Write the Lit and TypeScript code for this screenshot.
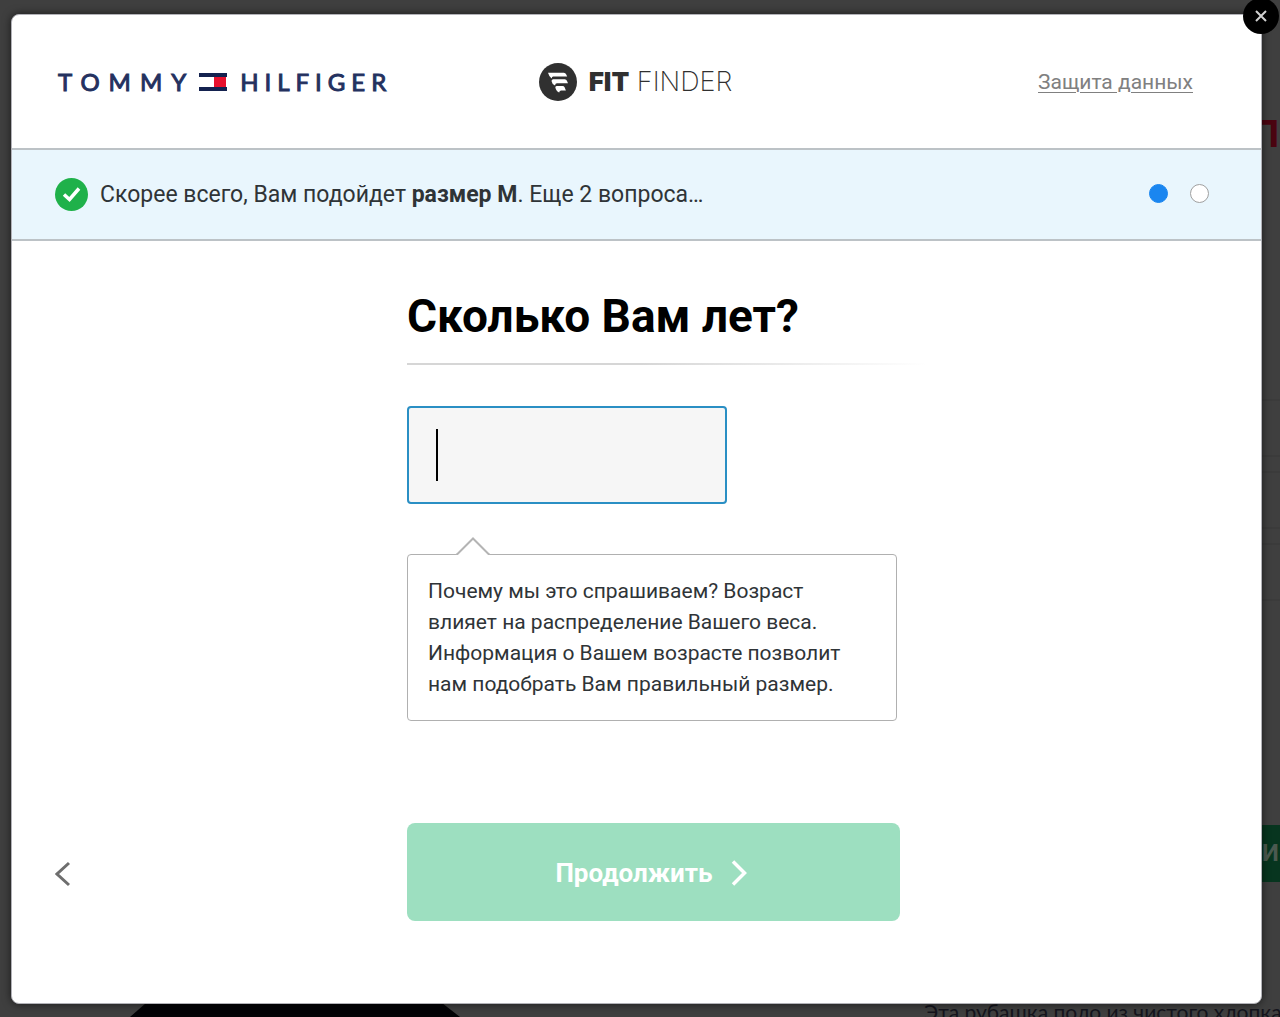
import { LitElement, html, css } from "lit";
import { customElement, state } from "lit/decorators.js";

@customElement("fit-brand")
class FitBrand extends LitElement {
  static styles = css`
    :host { display: block; }
    .brand { display: flex; align-items: center; gap: 13px; color: #24315f; font: 400 24px/32px Lato, sans-serif; -webkit-text-stroke: 1px #24315f; }
    .first { letter-spacing: 9px; margin-right: -9px; }
    .last { letter-spacing: 6px; }
    .flag { display: block; width: 28px; height: 18px; }
  `;
  render() {
    return html`<div class="brand">
      <span class="first">TOMMY</span>
      <svg class="flag" viewBox="0 0 28 18" aria-hidden="true">
        <rect x="0" y="0" width="28" height="4" fill="#14224f"></rect>
        <rect x="0" y="14" width="28" height="4" fill="#14224f"></rect>
        <rect x="0" y="4" width="15" height="10" fill="#fff"></rect>
        <rect x="15" y="4" width="12" height="10" fill="#e8112d"></rect>
      </svg>
      <span class="last">HILFIGER</span>
    </div>`;
  }
}

@customElement("fit-finder-logo")
class FitFinderLogo extends LitElement {
  static styles = css`
    :host { display: block; }
    .logo { display: flex; align-items: center; gap: 12px; padding-left: 20px; color: #303030; font: 200 27px/38px Inter, sans-serif; }
    .mark { display: block; width: 38px; height: 38px; }
    .fit { font-size: 26px; font-weight: 900; }
  `;
  render() {
    return html`<div class="logo">
      <svg class="mark" viewBox="0 0 38 38" aria-hidden="true">
        <circle cx="19" cy="19" r="19" fill="#303030"></circle>
        <path d="M9 9.800H24.800Q26.500 9.800 27.100 11.300L28.200 13.600H14.200Q12.800 13.600 12.600 15.400Q10.200 14 9 9.800Z" fill="#fff"></path>
        <path d="M12.500 17.900Q12.700 16.300 14.200 16.300H25.800Q27.300 16.300 27.900 17.800L29 20.200H18Q16.300 20.200 16 22.600Q13.200 21.600 12.500 17.900Z" fill="#fff"></path>
        <path d="M16.300 24.300Q16.500 22.900 18 22.900H23.500Q25 22.900 25.600 24.300L26.900 27.400H22.200Q20.400 27.400 20.200 29.500Q17 28.300 16.300 24.300Z" fill="#fff"></path>
      </svg>
      <span><span class="fit">FIT</span> FINDER</span>
    </div>`;
  }
}

@customElement("app-root")
class AppRoot extends LitElement {
  @state() private age = "";

  static styles = css`
    :host { display: block; font-family: Roboto, sans-serif; color: #2f3437; }
    * { box-sizing: border-box; }
    .page { position: relative; display: flex; min-height: 100vh; padding: 14px 18px 13px 11px; background: #3f3f3f; overflow: hidden; }
    .behind { position: absolute; inset: 0; overflow: hidden; }
    .price { position: absolute; right: 0; top: 110px; color: #4a0410; font: 700 38px/44px "Open Sans", sans-serif; }
    .buy { position: absolute; right: 0; top: 825px; width: 18px; height: 57px; background: #07351f; color: #4b5a50; font: 700 24px/57px Roboto, sans-serif; }
    .rules { position: absolute; right: 0; top: 397px; width: 18px; height: 204px; color: #383838; }
    .shirt { position: absolute; left: 130px; bottom: 0; width: 330px; height: 16px; }
    .desc { position: absolute; left: 924px; top: 1000px; margin: 0; white-space: nowrap; color: #14141c; font: 400 21px/24px Lato, sans-serif; }
    .dialog { position: relative; display: flex; flex: 1; flex-direction: column; min-width: 0; border: 1px solid #b2b2b8; border-radius: 8px; background: #fff; box-shadow: 0 0 8px rgba(0, 0, 0, 0.6); }
    .close { position: absolute; top: -17px; right: -18px; display: grid; place-items: center; width: 36px; height: 36px; padding: 0; border: 0; border-radius: 50%; background: #000; }
    .close svg { display: block; width: 12px; height: 12px; }
    .head { display: grid; grid-template-columns: 1fr auto 1fr; align-items: center; height: 133px; padding: 0 68px 0 46px; }
    .privacy { justify-self: end; color: #808080; font-size: 21px; line-height: 28px; text-decoration: underline; text-decoration-thickness: 1px; text-underline-offset: 3px; }
    .status { display: flex; align-items: center; gap: 12px; height: 93px; padding: 0 52px 0 43px; border-top: 2px solid #bcc2c6; border-bottom: 2px solid #bcc2c6; background: #e9f6fd; }
    .tick { display: block; flex: none; width: 33px; height: 33px; }
    .status p { flex: 1; margin: 0; font-size: 23px; line-height: 28px; }
    .steps { display: flex; gap: 22px; margin: 0; padding: 0 0 2px; list-style: none; }
    .step { width: 19px; height: 19px; border: 1px solid #a0a0a0; border-radius: 50%; background: #fff; }
    .step.on { border-color: #1a86f0; background: #1a86f0; }
    .form { display: grid; flex: 1; grid-template-columns: 34px minmax(0, 1fr); grid-template-rows: 1fr auto; padding: 48px 43px 82px; }
    .question { grid-column: 2; justify-self: center; width: 493px; max-width: 100%; }
    .title { margin: 0; color: #000; font-size: 46px; line-height: 54px; font-weight: 700; }
    .title label { white-space: nowrap; }
    .line { width: 520px; height: 2px; margin-top: 20px; background: linear-gradient(90deg, #d6d6d6 45%, #fff); }
    .field { position: relative; width: 320px; margin-top: 41px; }
    .age { display: block; width: 100%; height: 98px; padding: 0 28px; border: 2px solid #2a8fc4; border-radius: 4px; outline: 0; background: #f6f6f6; color: #000; font: 400 44px/52px Roboto, sans-serif; }
    .caret { position: absolute; left: 29px; top: 23px; width: 2px; height: 52px; background: #000; pointer-events: none; }
    .age:focus ~ .caret, .age:not(:placeholder-shown) ~ .caret { display: none; }
    .hint { position: relative; width: 490px; max-width: 100%; margin-top: 50px; padding: 21px 20px 20px; border: 1px solid #b0b0b0; border-radius: 4px; font-size: 21px; line-height: 31px; }
    .hint p { margin: 0; }
    .peak { position: absolute; left: 48px; top: -18px; display: block; width: 34px; height: 18px; }
    .back { display: grid; place-items: center start; width: 34px; padding: 3px 0 0; border: 0; background: none; }
    .back svg { display: block; width: 16px; height: 26px; }
    .next { display: flex; align-items: center; justify-content: center; gap: 18px; justify-self: center; width: 493px; max-width: 100%; height: 98px; padding: 2px 5px 0 0; border: 0; border-radius: 8px; background: #9ddfc0; color: #fff; font: 700 26px/32px Roboto, sans-serif; }
    .next svg { display: block; width: 16px; height: 26px; }
  `;

  render() {
    return html`
      <div class="page">
        <div class="behind" aria-hidden="true">
          <div class="price">П</div>
          <svg class="rules" viewBox="0 0 18 204"><path d="M0 3H18M0 59H18M0 75H18M0 131H18M0 147H18M0 203H18" stroke="currentColor"></path></svg>
          <div class="buy">И</div>
          <svg class="shirt" viewBox="0 0 330 16"><path d="M0 16L16 2H312L330 16Z" fill="#030306"></path></svg>
          <p class="desc">Эта рубашка поло из чистого хлопка</p>
        </div>
        <section class="dialog" role="dialog" aria-labelledby="question">
          <header class="head">
            <fit-brand></fit-brand>
            <fit-finder-logo></fit-finder-logo>
            <a class="privacy" href="#privacy">Защита данных</a>
          </header>
          <div class="status">
            <svg class="tick" viewBox="0 0 33 33" aria-hidden="true">
              <circle cx="16.500" cy="16.500" r="16.500" fill="#1fb14a"></circle>
              <path d="M9 16.500L14.500 21.500L24 10.500" fill="none" stroke="#fff" stroke-width="3.500"></path>
            </svg>
            <p>Скорее всего, Вам подойдет <b>размер M</b>. Еще 2 вопроса…</p>
            <ol class="steps"><li class="step on"></li><li class="step"></li></ol>
          </div>
          <form class="form" @submit=${(e: Event) => e.preventDefault()}>
            <div class="question">
              <h1 class="title" id="question"><label for="age">Сколько Вам лет?</label></h1>
              <div class="line"></div>
              <div class="field">
                <input class="age" id="age" inputmode="numeric" placeholder=" " .value=${this.age}
                  @input=${(e: Event) => { this.age = (e.target as HTMLInputElement).value; }}>
                <span class="caret"></span>
              </div>
              <div class="hint">
                <svg class="peak" viewBox="0 0 34 18" aria-hidden="true">
                  <path d="M0 18L17 1L34 18Z" fill="#fff"></path>
                  <path d="M0 17.500H1L17 1.500L33 17.500H34" fill="none" stroke="#b4b4b4" stroke-width="2"></path>
                </svg>
                <p>Почему мы это спрашиваем? Возраст влияет на распределение Вашего веса. Информация о Вашем возрасте позволит нам подобрать Вам правильный размер.</p>
              </div>
            </div>
            <button class="back" type="button" aria-label="Назад">
              <svg viewBox="0 0 16 26" aria-hidden="true"><path d="M14 2L2 13L14 24" fill="none" stroke="#6e6e6e" stroke-width="3"></path></svg>
            </button>
            <button class="next" type="submit">
              Продолжить
              <svg viewBox="0 0 16 26" aria-hidden="true"><path d="M2 1.500L13.500 13L2 24.500" fill="none" stroke="#fff" stroke-width="3.500"></path></svg>
            </button>
          </form>
          <button class="close" type="button" aria-label="Закрыть">
            <svg viewBox="0 0 12 12" aria-hidden="true"><path d="M1 1L11 11M11 1L1 11" stroke="#d0d0d0" stroke-width="2"></path></svg>
          </button>
        </section>
      </div>
    `;
  }
}
